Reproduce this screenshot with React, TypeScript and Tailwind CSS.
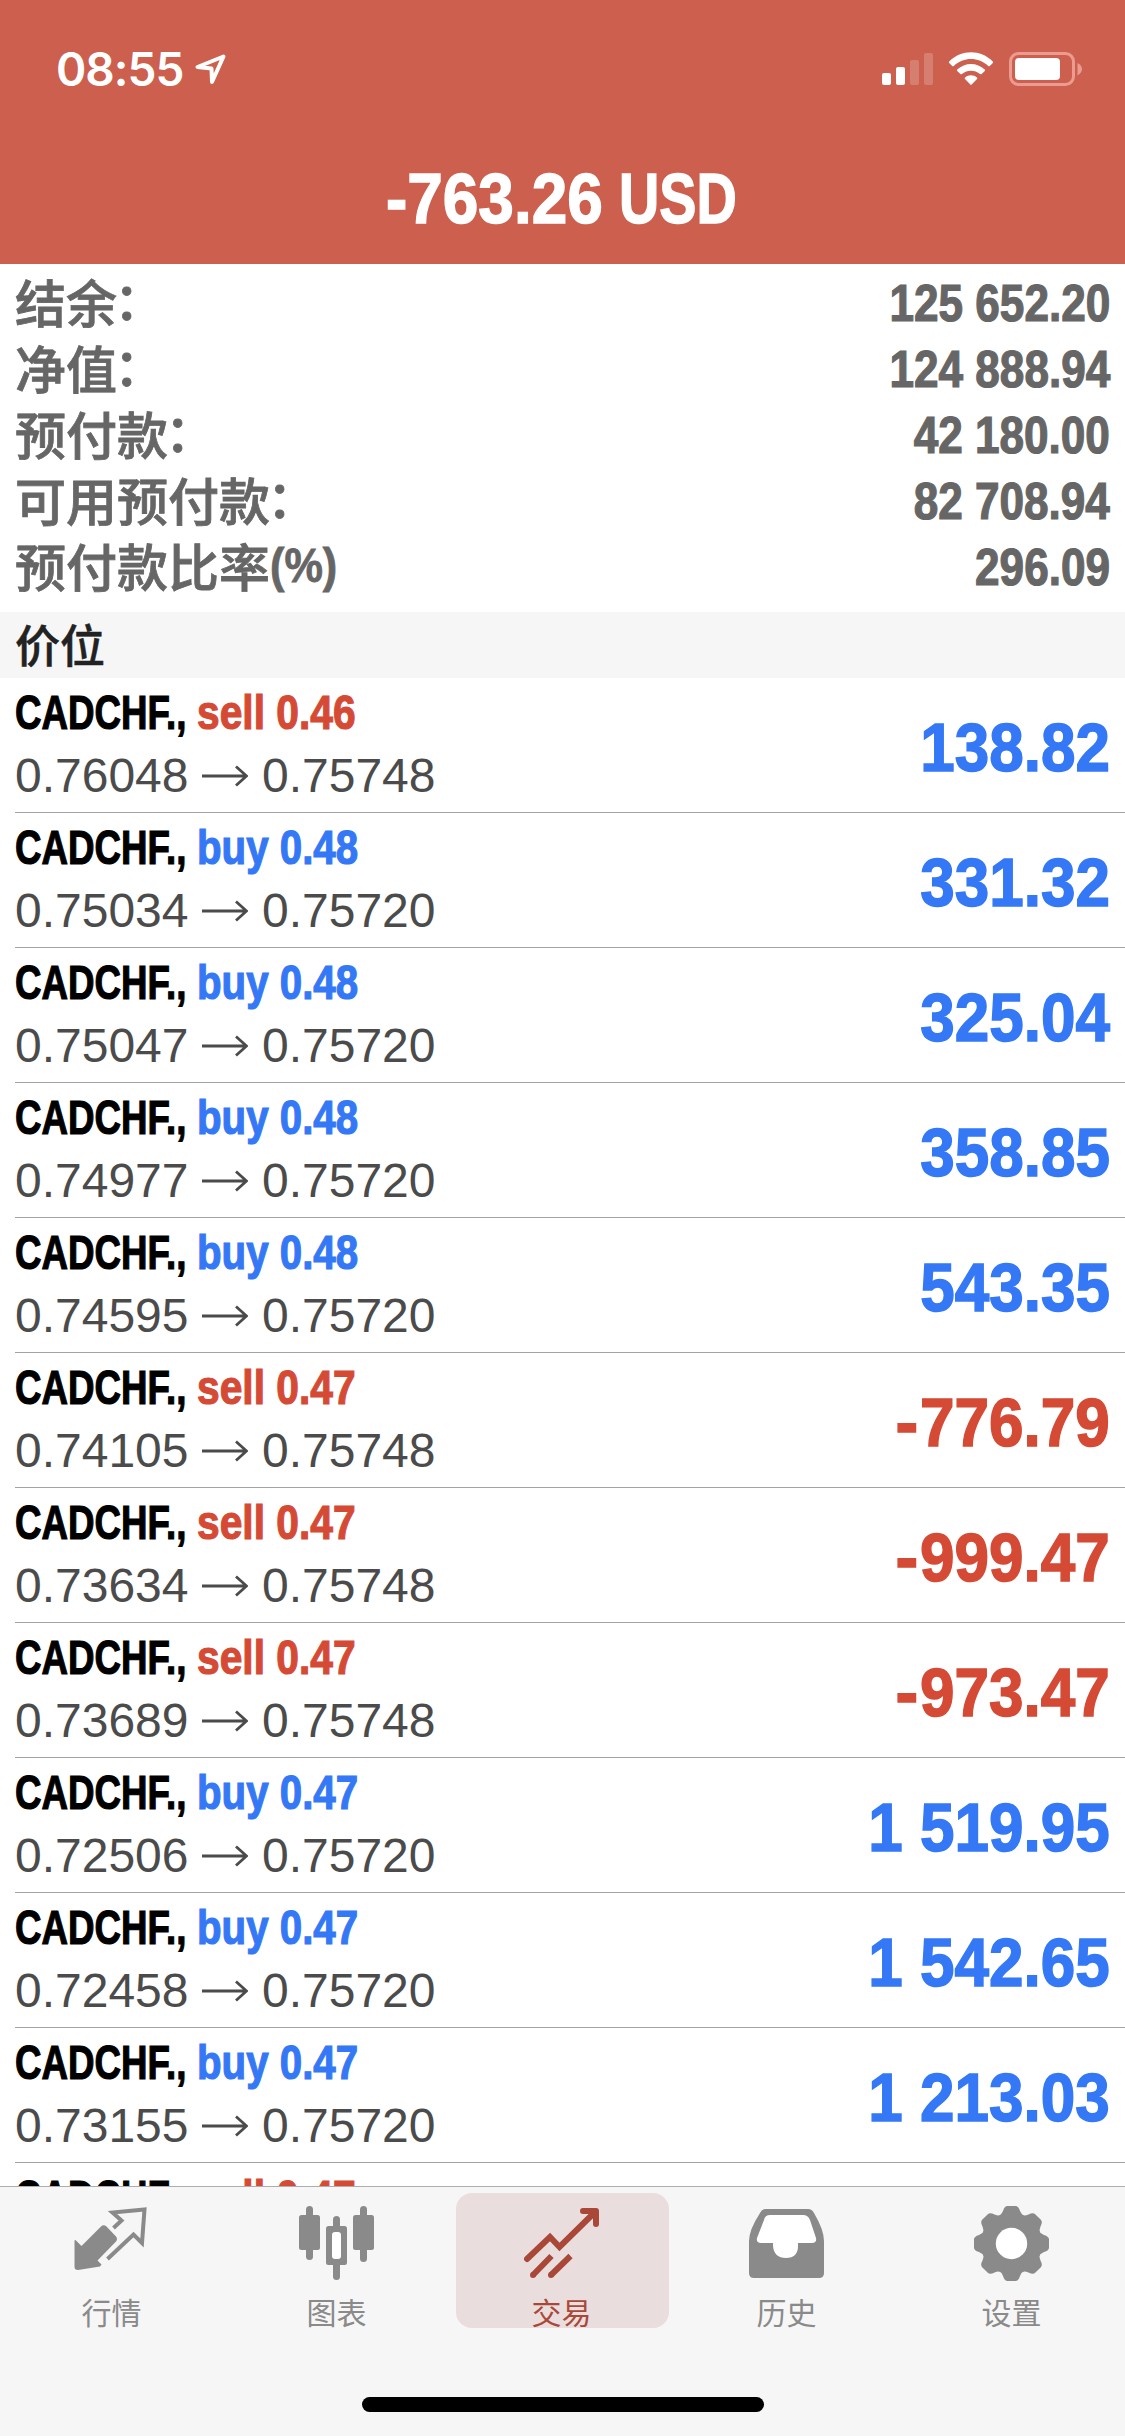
import React from "react";

type Side = "sell" | "buy";
type Position = { side: Side; lots: string; open: string; current: string; profit: string };

const summary: [string, string, string][] = [
  ["结余", "：", "125 652.20"],
  ["净值", "：", "124 888.94"],
  ["预付款", "：", "42 180.00"],
  ["可用预付款", "：", "82 708.94"],
  ["预付款比率", "(%)", "296.09"],
];

const positions: Position[] = [
  { side: "sell", lots: "0.46", open: "0.76048", current: "0.75748", profit: "138.82" },
  { side: "buy", lots: "0.48", open: "0.75034", current: "0.75720", profit: "331.32" },
  { side: "buy", lots: "0.48", open: "0.75047", current: "0.75720", profit: "325.04" },
  { side: "buy", lots: "0.48", open: "0.74977", current: "0.75720", profit: "358.85" },
  { side: "buy", lots: "0.48", open: "0.74595", current: "0.75720", profit: "543.35" },
  { side: "sell", lots: "0.47", open: "0.74105", current: "0.75748", profit: "-776.79" },
  { side: "sell", lots: "0.47", open: "0.73634", current: "0.75748", profit: "-999.47" },
  { side: "sell", lots: "0.47", open: "0.73689", current: "0.75748", profit: "-973.47" },
  { side: "buy", lots: "0.47", open: "0.72506", current: "0.75720", profit: "1 519.95" },
  { side: "buy", lots: "0.47", open: "0.72458", current: "0.75720", profit: "1 542.65" },
  { side: "buy", lots: "0.47", open: "0.73155", current: "0.75720", profit: "1 213.03" },
];

function StatusBar() {
  return (
    <div className="flex h-[138px] items-center justify-between pl-[56px] pr-[43px] text-white">
      <div className="flex items-center">
        <span className="w-[138px] whitespace-nowrap font-['Inter',sans-serif] text-[46px] font-semibold leading-none tracking-[-1px]">08:55</span>
        <svg width="34" height="34" viewBox="0 0 34 34" fill="none" stroke="white" strokeWidth="4" strokeLinejoin="round">
          <path d="M29.5 4.5 3.5 15l14 1.500 .5 13.500Z" />
        </svg>
      </div>
      <div className="flex items-center">
        <svg width="52" height="34" viewBox="0 0 52 34" fill="white">
          <rect x="0" y="21" width="9" height="12" rx="2" />
          <rect x="14" y="15" width="9" height="18" rx="2" />
          <rect x="28" y="8" width="9" height="25" rx="2" opacity="0.2" />
          <rect x="42" y="1" width="9" height="32" rx="2" opacity="0.2" />
        </svg>
        <svg className="ml-[14px]" width="46" height="34" viewBox="0 0 46 34" fill="white">
          <path d="M1.200 9.500C13.500-2.800 32.500-2.800 44.800 9.500Q45.500 10.300 44.800 11L41.800 14Q41 14.600 40.200 14C30.500 4.800 15.500 4.800 5.800 14Q5 14.600 4.200 14L1.200 11Q.5 10.300 1.200 9.500Z" />
          <path d="M9.200 17.500C17 10 29 10 36.800 17.500Q37.500 18.200 36.800 19L33.600 22Q32.900 22.700 32.100 22C27 17.500 19 17.500 13.900 22Q13.100 22.700 12.400 22L9.200 19Q8.500 18.200 9.200 17.500Z" />
          <path d="M17 25.500C20.500 22.400 25.500 22.400 29 25.500Q29.800 26.200 29 27L23.700 32.500Q23 33.200 22.300 32.500L17 27Q16.200 26.200 17 25.500Z" />
        </svg>
        <svg className="ml-[15px]" width="73" height="34" viewBox="0 0 73 34">
          <rect x="1.500" y="1.500" width="63" height="31" rx="8" fill="none" stroke="#eb9b8f" strokeWidth="3" />
          <rect x="6" y="6" width="45" height="22" rx="4" fill="white" />
          <path d="M68.500 11Q73 13.500 73 17T68.500 23.500Z" fill="#eb9b8f" />
        </svg>
      </div>
    </div>
  );
}

function PositionRow({ p }: { p: Position }) {
  const negative = p.profit.startsWith("-");
  const sideColor = p.side === "sell" ? "text-[#d54a35] scale-x-[0.84]" : "text-[#3478f6] scale-x-[0.83]";
  const profitColor = negative ? "text-[#d54a35]" : "text-[#3478f6]";
  return (
    <div className="ml-[15px] flex h-[135px] shrink-0 items-center justify-between border-b border-[#a3a3a3] pr-[15px] font-['Liberation_Sans',sans-serif]">
      <div className="flex h-full flex-col pt-[6px]">
        <div className="flex h-[56px] items-center whitespace-nowrap text-[48.500px] font-bold leading-none">
          <span className="w-[182px]">
            <span className="inline-block origin-left scale-x-[0.757] text-black [-webkit-text-stroke:1.2px]">CADCHF.,</span>
          </span>
          <span className={`inline-block origin-left [-webkit-text-stroke:1.2px] ${sideColor}`}>
            {p.side} {p.lots}
          </span>
        </div>
        <div className="mt-[4px] flex h-[64px] items-center text-[48px] leading-none text-[#4b4b4b]">
          <span className="w-[187px]">{p.open}</span>
          <svg width="46" height="22" viewBox="0 0 46 22" fill="none" stroke="#4b4b4b" strokeWidth="2.800">
            <path d="M0 11H44M34 1.500 44.500 11 34 20.500" />
          </svg>
          <span className="ml-[14px]">{p.current}</span>
        </div>
      </div>
      <span className={`mt-[3px] flex origin-right scale-x-[0.912] items-center whitespace-pre text-[68px] font-bold leading-none [-webkit-text-stroke:1.500px] ${profitColor}`}>
        {negative && <span className="mr-[2px] origin-right scale-x-[1.1]">-</span>}
        {p.profit.replace("-", "")}
      </span>
    </div>
  );
}

const QuotesIcon = () => (
  <svg className="shrink-0" width="75" height="75" viewBox="0 0 75 75">
    <path d="M0.500 35.500Q0.500 33 2.500 35L7.500 40 27 20.500Q29.500 18 32.500 20.500L42 30.500Q44 33 42 35.500L23.500 54.500 27.500 58.500 26 60.500 4 64Q0.500 64 0.500 61Z" fill="#8a8a8a" />
    <path d="M39.500 22 47.500 14.500 38.500 6.500 70.500 3.500 68 37 59.500 28.500 33.500 53" fill="none" stroke="#8a8a8a" strokeWidth="4" />
  </svg>
);

const ChartIcon = () => (
  <svg className="shrink-0" width="75" height="75" viewBox="0 0 75 75" fill="#8a8a8a">
    <rect x="0" y="9" width="21" height="35" rx="2.500" />
    <rect x="7" y="0" width="7" height="54" rx="3.500" />
    <rect x="54" y="9" width="21" height="35" rx="2.500" />
    <rect x="61" y="0" width="7" height="56" rx="3.500" />
    <rect x="34" y="10" width="7" height="64" rx="3.500" />
    <rect x="27" y="20" width="21" height="39" rx="2.500" />
    <rect x="33" y="26" width="9" height="27" rx="3" fill="white" />
  </svg>
);

const TradeIcon = () => (
  <svg className="shrink-0" width="75" height="75" viewBox="0 0 75 75" fill="none" stroke="#a94739" strokeWidth="6">
    <path d="M3 53 26 31 35.500 41 71 6" strokeLinecap="round" />
    <path d="M59 5H72V18" strokeLinecap="round" strokeLinejoin="round" />
    <path d="M27.500 50 9 69M46.500 50 27 69" />
    <path d="M9 69V69M27 69V69" strokeLinecap="round" />
  </svg>
);

const HistoryIcon = () => (
  <svg className="shrink-0" width="75" height="75" viewBox="0 0 75 75">
    <path d="M17 3H59Q63 3 65 7Q75 24 75 35V67Q75 72 70 72H5Q0 72 0 67V35Q0 24 11 7Q13 3 17 3Z" fill="#8a8a8a" />
    <path d="M21 9H54Q59 9 61 14L67 32Q68 37 63 37H49V40Q49 52 37 52T24 40V37H12Q7 37 8 32L15 14Q16 9 21 9Z" fill="white" />
  </svg>
);

const SettingsIcon = () => (
  <svg className="shrink-0" width="75" height="75" viewBox="0 0 75 75">
    <g fill="#8a8a8a">
      <circle cx="37.500" cy="37.500" r="29.500" />
      {[0, 45, 90, 135, 180, 225, 270, 315].map((angle) => (
        <path
          key={angle}
          transform={`rotate(${angle} 37.5 37.5)`}
          d="M24 10.500Q27.500 9 29 5Q30.500 0 33.500 0H41.500Q44.500 0 46 5Q47.500 9 51 10.500L47 20H28Z"
        />
      ))}
    </g>
    <circle cx="37.500" cy="37.500" r="15.700" fill="white" />
  </svg>
);

const tabs = [
  { label: "行情", icon: QuotesIcon, active: false },
  { label: "图表", icon: ChartIcon, active: false },
  { label: "交易", icon: TradeIcon, active: true },
  { label: "历史", icon: HistoryIcon, active: false },
  { label: "设置", icon: SettingsIcon, active: false },
];

function TabBar() {
  return (
    <nav className="flex h-[250px] shrink-0 flex-col items-center border-t border-[#adadad] bg-[#f6f6f6]">
      <div className="grid w-full grid-cols-5">
        {tabs.map(({ label, icon: Icon, active }) => (
          <div key={label} className="flex justify-center pt-[6px]">
            <div
              className={`flex h-[135px] w-[213px] flex-col items-center rounded-[16px] pr-[2px] pt-[13px] ${
                active ? "bg-[#eadddd] text-[#a94739]" : "text-[#8a8a8a]"
              }`}
            >
              <Icon />
              <span className="mt-[10px] text-[30px] leading-[40px]">{label}</span>
            </div>
          </div>
        ))}
      </div>
      <div className="mt-[69px] h-[15px] w-[402px] rounded-full bg-black" />
    </nav>
  );
}

export default function App() {
  return (
    <div className="flex h-[2436px] w-[1125px] flex-col overflow-hidden bg-white font-['Noto_Sans_CJK_SC',sans-serif]">
      <header className="h-[264px] shrink-0 bg-[#cc5f4d]">
        <StatusBar />
        <div className="flex h-[121px] items-center justify-center">
          <h1 className="flex whitespace-nowrap font-['Liberation_Sans',sans-serif] text-[71px] font-bold leading-none text-white [-webkit-text-stroke:1.500px]">
            <span className="w-[233px]">
              <span className="inline-block origin-left scale-x-[0.9]">-763.26</span>
            </span>
            <span className="w-[120px]">
              <span className="inline-block origin-left scale-x-[0.785]">USD</span>
            </span>
          </h1>
        </div>
      </header>

      <section className="h-[348px] shrink-0 pl-[15px] pr-[15px] pt-[4px] text-[#666666]">
        {summary.map(([label, suffix, value]) => (
          <div key={label} className="flex h-[66px] items-center justify-between whitespace-nowrap">
            <div className="flex items-center text-[51px] font-medium leading-[60px] [-webkit-text-stroke:0.800px]">
              <span>{label}</span>
              {suffix === "：" ? (
                <span className="-ml-[3px] pb-[6px]">{suffix}</span>
              ) : (
                <span className="origin-left scale-x-[0.9] pt-[2px] font-['Liberation_Sans',sans-serif] text-[48px] font-bold">{suffix}</span>
              )}
            </div>
            <span className="mt-[5px] origin-right scale-x-[0.865] font-['Liberation_Sans',sans-serif] text-[51px] font-bold leading-none [-webkit-text-stroke:1.200px]">
              {value}
            </span>
          </div>
        ))}
      </section>

      <div className="flex h-[66px] shrink-0 items-center bg-[#f6f6f6] pb-[4px] pl-[15px] text-[45px] font-medium leading-none text-[#222222] [-webkit-text-stroke:0.500px]">价位</div>

      <main className="flex h-[1508px] shrink-0 flex-col overflow-hidden">
        {positions.map((p) => (
          <PositionRow key={p.open} p={p} />
        ))}
        <PositionRow p={{ side: "sell", lots: "0.47", open: "0.73200", current: "0.75748", profit: "" }} />
      </main>

      <TabBar />
    </div>
  );
}
